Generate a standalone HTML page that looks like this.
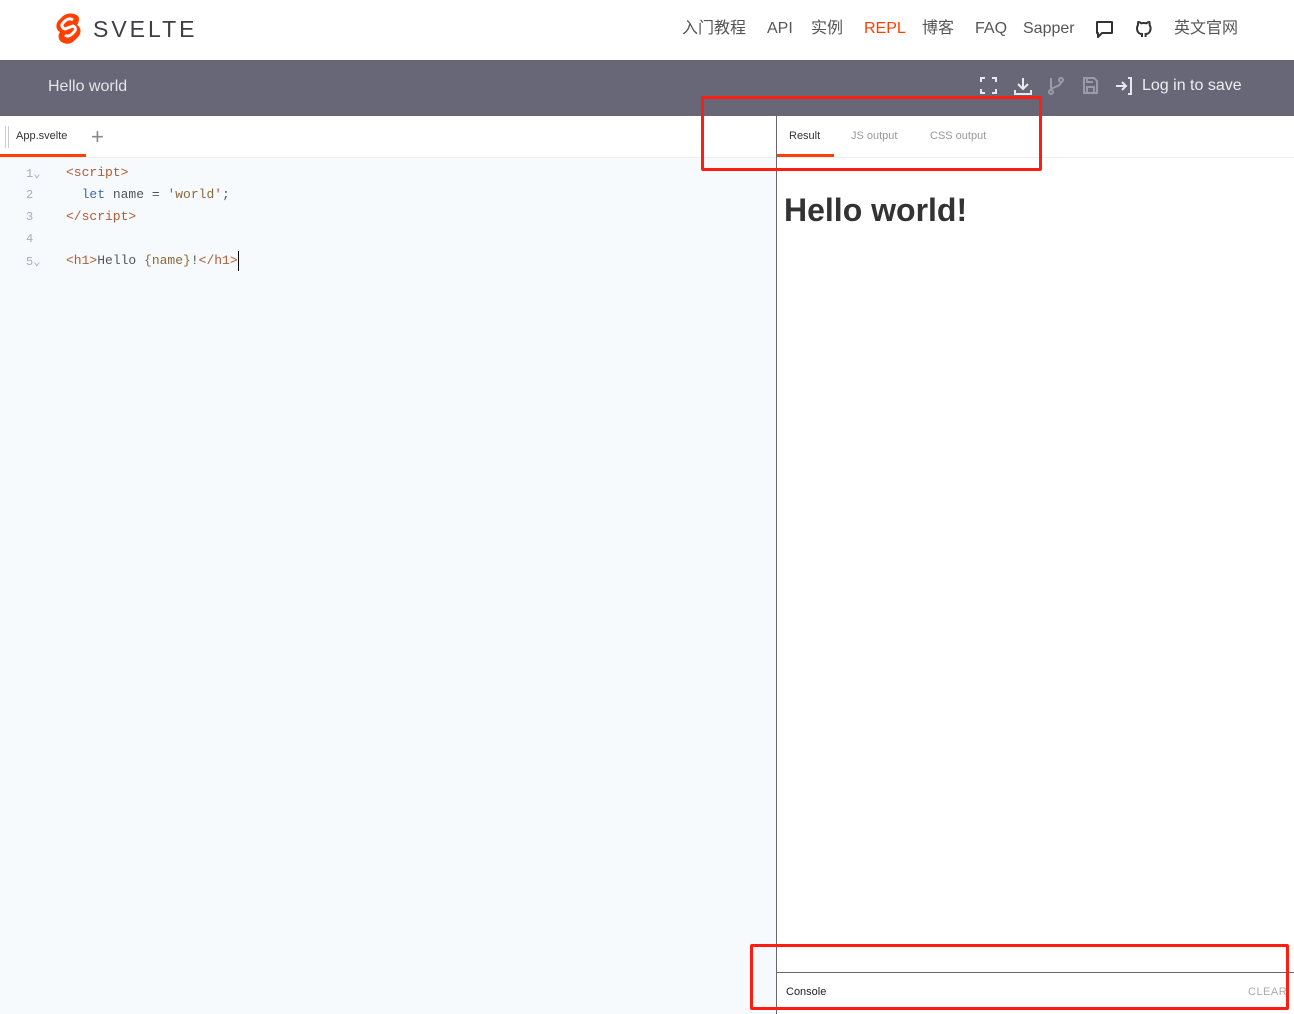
<!DOCTYPE html>
<html><head><meta charset="utf-8"><style>
*{box-sizing:border-box;margin:0;padding:0}
body{width:1294px;height:1014px;overflow:hidden;font-family:"Liberation Sans","Noto Sans CJK SC",sans-serif;background:#fff;position:relative}
.abs{position:absolute;white-space:nowrap}
.nav{font-size:16px;color:#555;top:19px;line-height:20px;height:20px}
.code{font-family:"Liberation Mono","DejaVu Sans Mono",monospace;font-size:13px;color:#555}
.ln{font-family:"Liberation Mono",monospace;font-size:12px;color:#aab}
.tag{color:#b35a34}
.red{position:absolute;border:3px solid #ff1d12;border-radius:2px}
</style></head><body>
<svg class="abs" style="left:54px;top:12px" width="30" height="34" viewBox="0 0 30 34"><path d="M24 4 C19 0 12 1 8 5 L5 8 C1 12 2 18 6 20 C3 24 5 30 10 31 C14 33 18 31 21 28 L24 25 C28 21 27 15 23 13 C26 9 25 5 24 4Z" fill="#ff3e00"/><path d="M19 8 C16 6 13 7 11 9 L9 11 C7 13 8 16 11 17 L19 14 C22 15 22 18 20 20 L18 22 C16 24 13 25 11 23" fill="none" stroke="#fff" stroke-width="3"/></svg>
<div class="abs" style="left:93px;top:15px;font-size:23px;line-height:28px;letter-spacing:3px;color:#3e3e48">SVELTE</div>
<div class="abs nav" style="left:682px">入门教程</div>
<div class="abs nav" style="left:767px">API</div>
<div class="abs nav" style="left:811px">实例</div>
<div class="abs nav" style="left:864px;color:#ff3e00">REPL</div>
<div class="abs nav" style="left:922px">博客</div>
<div class="abs nav" style="left:975px">FAQ</div>
<div class="abs nav" style="left:1023px">Sapper</div>
<svg class="abs" style="left:1095px;top:20px" width="19" height="19" viewBox="0 0 19 19"><path d="M2 2h15v11H7l-4 4v-4H2z" fill="none" stroke="#333" stroke-width="2" stroke-linejoin="round"/></svg>
<svg class="abs" style="left:1135px;top:20px" width="19" height="19" viewBox="0 0 19 19"><path d="M7 17v-3c-3 0-5-2-5-6 0-1 .5-2 1-3-.2-1 0-2 .3-3 1 0 2 .5 3 1.3a9 9 0 0 1 5 0C12.300 2.500 13.300 2 14.300 2c.3 1 .5 2 .3 3 .6 1 1 2 1 3 0 4-2 6-5 6v3" fill="none" stroke="#333" stroke-width="2"/></svg>
<div class="abs nav" style="left:1174px">英文官网</div>
<div class="abs" style="left:0;top:60px;width:1294px;height:56px;background:#676778"></div>
<div class="abs" style="left:48px;top:78px;font-size:16px;color:#e4e4ea">Hello world</div>
<svg class="abs" style="left:978px;top:75px" width="160" height="22" viewBox="0 0 160 22" fill="none" stroke="#e8e8ee" stroke-width="2">
<path d="M3 7V3h4M14 3h4v4M18 14v4h-4M7 18H3v-4"/>
<path d="M45 3v11M40 9l5 5 5-5M37 15v4h16v-4"/>
<g stroke="#9a9aaa"><circle cx="73" cy="17" r="2"/><circle cx="83" cy="5" r="2"/><path d="M73 3v12M83 7c0 5-10 5-10 8"/></g>
<path stroke="#9a9aaa" d="M106 3h10l3 3v12h-13zM109 3v4h6M109 18v-6h7v6"/>
<path d="M150 3h3v16h-3M138 11h10M144 7l4 4-4 4"/>
</svg>
<div class="abs" style="left:1142px;top:77px;font-size:16px;color:#eee">Log in to save</div>
<div class="abs" style="left:0;top:116px;width:1294px;height:42px;border-bottom:1px solid #eee"></div>
<div class="abs" style="left:5px;top:126px;width:4px;height:22px;border-left:1px solid #ccc;border-right:1px solid #ccc"></div>
<div class="abs" style="left:16px;top:130px;font-size:11px;color:#333">App.svelte</div>
<div class="abs" style="left:91px;top:124px;font-size:22px;color:#888;font-weight:300">+</div>
<div class="abs" style="left:0;top:154px;width:86px;height:3px;background:#ff3e00"></div>
<div class="abs" style="left:0;top:158px;width:776px;height:856px;background:#f6fafd"></div>
<div class="abs" style="left:776px;top:116px;width:1px;height:898px;background:#676778"></div>
<div class="abs" style="left:789px;top:130px;font-size:11px;color:#333">Result</div>
<div class="abs" style="left:851px;top:130px;font-size:11px;color:#999">JS output</div>
<div class="abs" style="left:930px;top:130px;font-size:11px;color:#999">CSS output</div>
<div class="abs" style="left:777px;top:154px;width:57px;height:3px;background:#ff3e00"></div>
<div class="abs ln" style="left:26px;top:166px">1⌄</div>
<div class="abs ln" style="left:26px;top:188px">2</div>
<div class="abs ln" style="left:26px;top:210px">3</div>
<div class="abs ln" style="left:26px;top:232px">4</div>
<div class="abs ln" style="left:26px;top:254px">5⌄</div>
<div class="abs code" style="left:66px;top:165px"><span class="tag">&lt;script&gt;</span></div>
<div class="abs code" style="left:66px;top:187px">&nbsp;&nbsp;<span style="color:#3c6ea8">let</span> name = <span style="color:#8a6a3a">'world'</span>;</div>
<div class="abs code" style="left:66px;top:209px"><span class="tag">&lt;/script&gt;</span></div>
<div class="abs code" style="left:66px;top:253px"><span class="tag">&lt;h1&gt;</span>Hello <span style="color:#8a6a3a">{name}</span>!<span class="tag">&lt;/h1&gt;</span></div>
<div class="abs" style="left:238px;top:251px;width:1px;height:20px;background:#000"></div>
<div class="abs" style="left:784px;top:192px;font-size:32px;font-weight:bold;color:#333">Hello world!</div>
<div class="abs" style="left:777px;top:972px;width:517px;height:1px;background:#676778"></div>
<div class="abs" style="left:786px;top:986px;font-size:11px;color:#222">Console</div>
<div class="abs" style="left:1248px;top:986px;font-size:11px;color:#aaa;letter-spacing:.5px">CLEAR</div>
<div class="red" style="left:701px;top:96px;width:341px;height:75px"></div>
<div class="red" style="left:750px;top:944px;width:539px;height:66px"></div>
</body></html>
